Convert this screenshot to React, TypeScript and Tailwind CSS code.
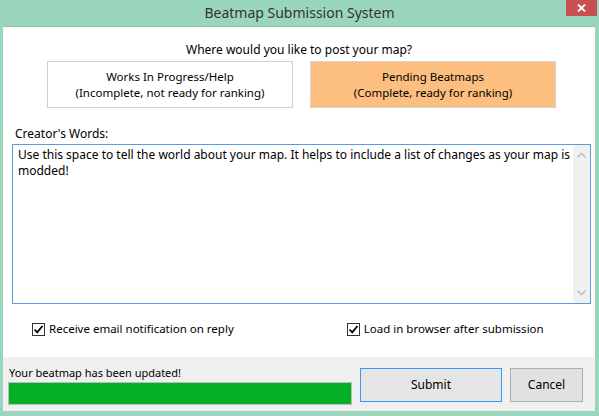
import React from "react"

const font = { fontFamily: '"Segoe UI", "Noto Sans", "Open Sans", sans-serif' }

function Check({ label, checked = true }: { label: string; checked?: boolean }) {
  return (
    <label className="flex items-center gap-[4px] text-[11.5px] leading-[16px] text-black">
      <span className="flex h-[13px] w-[13px] items-center justify-center border border-[#333333] bg-white">
        {checked && (
          <svg width="11" height="11" viewBox="0 0 11 11">
            <path d="M1.5 5.5 L4.2 8.3 L9.5 2" fill="none" stroke="#000" strokeWidth="1.8" />
          </svg>
        )}
      </span>
      {label}
    </label>
  )
}

function Chevron({ up }: { up?: boolean }) {
  return (
    <svg width="9" height="6" viewBox="0 0 9 6">
      <path
        d={up ? "M0.5 5.5 L4.5 1.5 L8.5 5.5" : "M0.5 0.5 L4.5 4.5 L8.5 0.5"}
        fill="none"
        stroke="#c2c2c2"
        strokeWidth="1.6"
      />
    </svg>
  )
}

export default function App() {
  return (
    <div className="flex h-[416px] w-[599px] flex-col bg-[#9ad6bb]" style={font}>
      {/* title bar */}
      <div className="relative flex h-[26px] items-center justify-center">
        <span className="text-[14px] leading-[20px] text-[#333]">Beatmap Submission System</span>
        <div className="absolute right-[2px] top-0 flex h-[16px] w-[31px] items-center justify-center bg-[#c75050]">
          <svg width="9" height="8" viewBox="0 0 9 8">
            <path d="M1 0.5 L8 7.5 M8 0.5 L1 7.5" stroke="#fff" strokeWidth="1.8" />
          </svg>
        </div>
      </div>

      <div className="mb-[5px] ml-[3px] mr-[4px] flex flex-1 flex-col border-t border-[#8cc4aa] bg-white">
        <div className="flex flex-1 flex-col">
          <div className="pt-[15px] text-center text-[12px] leading-[16px] text-black">
            Where would you like to post your map?
          </div>
          <div className="mt-[3px] flex gap-[17px] pl-[44px]">
            <div className="flex h-[47px] w-[246px] flex-col items-center justify-center border border-[#d0d0d0] bg-white text-[11.5px] leading-[16px] text-black">
              <span>Works In Progress/Help</span>
              <span>(Incomplete, not ready for ranking)</span>
            </div>
            <div className="flex h-[47px] w-[246px] flex-col items-center justify-center border border-[#d5d5d5] bg-[#fdbf7f] text-[11.5px] leading-[16px] text-black">
              <span>Pending Beatmaps</span>
              <span>(Complete, ready for ranking)</span>
            </div>
          </div>
          <div className="ml-[12px] mt-[18px] text-[12px] leading-[16px] text-black">Creator's Words:</div>
          <div className="ml-[9px] mr-[4px] mt-[2px] flex h-[160px] border border-[#569de5] bg-white">
            <div className="flex-1 pl-[5px] pt-[2px] text-[12px] leading-[16px] text-black">
              Use this space to tell the world about your map. It helps to include a list of changes as your map is modded!
            </div>
            <div className="flex w-[17px] flex-col items-center justify-between bg-[#f0f0f0] py-[7px]">
              <Chevron up />
              <Chevron />
            </div>
          </div>
          <div className="mt-[17px] flex">
            <div className="ml-[29px]">
              <Check label="Receive email notification on reply" />
            </div>
            <div className="ml-[113px]">
              <Check label="Load in browser after submission" />
            </div>
          </div>
        </div>

        {/* footer */}
        <div className="flex h-[54px] bg-[#f0f0f0]">
          <div className="ml-[5px] flex flex-col">
            <div className="pl-[1px] pt-[8px] text-[11px] leading-[16px] text-black">Your beatmap has been updated!</div>
            <div className="mt-[1px] h-[23px] w-[344px] border border-[#bcbcbc] bg-[#06b025]" />
          </div>
          <div className="ml-[8px] flex gap-[8px] pt-[11px]">
            <button className="h-[34px] w-[142px] border border-[#3399ff] bg-[#e5e5e5] text-[12px] text-black">
              Submit
            </button>
            <button className="h-[34px] w-[73px] border border-[#adadad] bg-[#e1e1e1] text-[12px] text-black">
              Cancel
            </button>
          </div>
        </div>
      </div>
    </div>
  )
}
